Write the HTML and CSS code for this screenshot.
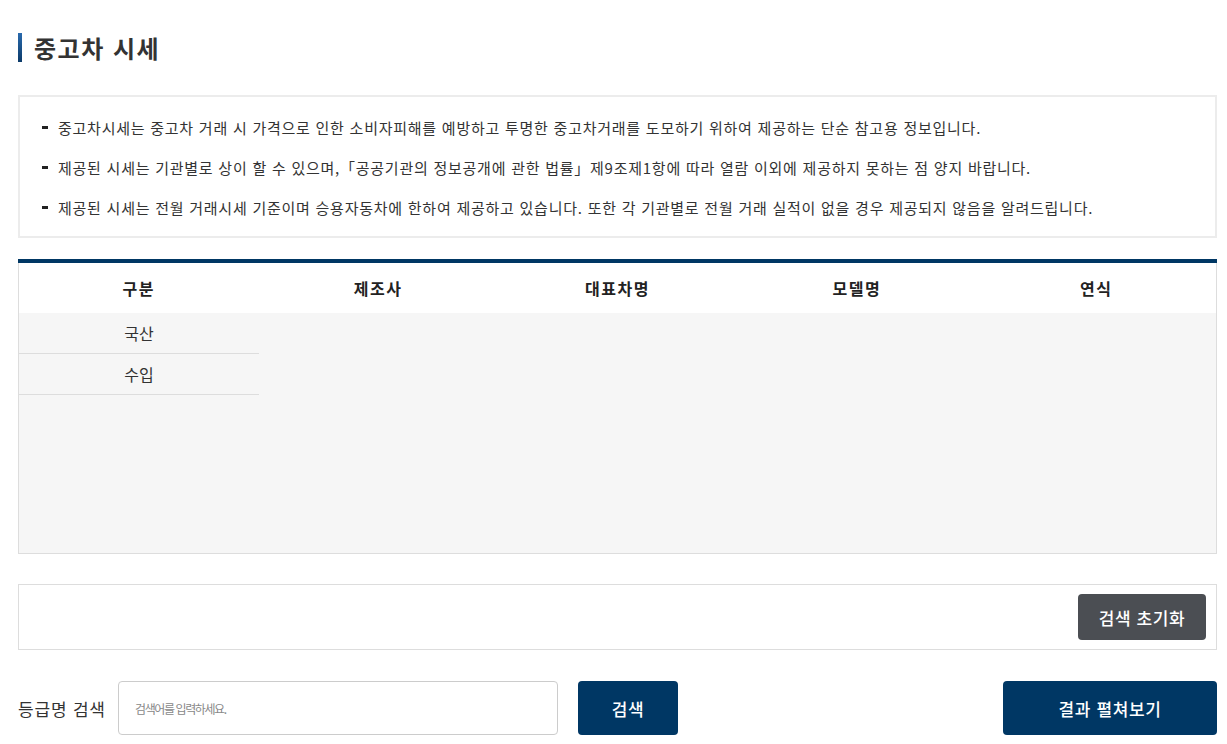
FILE: index.html
```html
<!DOCTYPE html>
<html lang="ko">
<head>
    <meta charset="UTF-8">
    <meta name="viewport" content="width=device-width, initial-scale=1.0">
    <title>중고차 시세</title>
    <link rel="stylesheet" href="styles.css">
</head>
<body>
    <main class="page">
        <h1 class="page-title">중고차 시세</h1>

        <ul class="notice">
            <li>중고차시세는 중고차 거래 시 가격으로 인한 소비자피해를 예방하고 투명한 중고차거래를 도모하기 위하여 제공하는 단순 참고용 정보입니다.</li>
            <li>제공된 시세는 기관별로 상이 할 수 있으며,「공공기관의 정보공개에 관한 법률」제9조제1항에 따라 열람 이외에 제공하지 못하는 점 양지 바랍니다.</li>
            <li>제공된 시세는 전월 거래시세 기준이며 승용자동차에 한하여 제공하고 있습니다. 또한 각 기관별로 전월 거래 실적이 없을 경우 제공되지 않음을 알려드립니다.</li>
        </ul>

        <section class="price-table">
            <div class="table-head">
                <div>구분</div>
                <div>제조사</div>
                <div>대표차명</div>
                <div>모델명</div>
                <div>연식</div>
            </div>
            <div class="table-body">
                <ul class="type-list">
                    <li>국산</li>
                    <li>수입</li>
                </ul>
            </div>
        </section>

        <div class="reset-box">
            <button type="button" class="btn btn-gray">검색 초기화</button>
        </div>

        <form class="search-row" action="/" method="get">
            <label for="grade-name">등급명 검색</label>
            <input id="grade-name" type="text" name="grade-name" placeholder="검색어를 입력하세요.">
            <button type="submit" class="btn btn-navy btn-search">검색</button>
            <button type="button" class="btn btn-navy btn-result">결과 펼쳐보기</button>
        </form>
    </main>
</body>
</html>
```

FILE: styles.css
```css
*,
*::before,
*::after {
    box-sizing: border-box;
    margin: 0;
    padding: 0;
}

body {
    font-family: "Noto Sans CJK KR", "Noto Sans", sans-serif;
    color: #333;
    background: #fff;
}

.page {
    padding: 33px 10px 0 18px;
}

.page-title {
    display: flex;
    align-items: center;
    height: 29px;
    padding-left: 12px;
    border-left: 4px solid #0d3d6e;
    border-image: linear-gradient(#2a6cb0, #0b3866) 1;
    font-size: 24px;
    font-weight: 700;
    line-height: 29px;
    letter-spacing: 1.5px;
    color: #333;
}

.notice {
    margin-top: 33px;
    padding: 21px 22px 18px;
    border: 2px solid #ececec;
    list-style: none;
}

.notice li {
    position: relative;
    padding-left: 16px;
    font-size: 15px;
    line-height: 20px;
    letter-spacing: 0.75px;
    color: #333;
}

.notice li + li {
    margin-top: 20px;
}

.notice li::before {
    content: '';
    position: absolute;
    left: 0;
    top: 8px;
    width: 6px;
    height: 3px;
    background: #222;
}

.price-table {
    margin-top: 21px;
    border-top: 4px solid #003764;
}

.table-head {
    display: grid;
    grid-template-columns: repeat(5, 1fr);
    height: 50px;
    border-left: 1px solid #ddd;
    border-right: 1px solid #ddd;
    background: #fff;
}

.table-head div {
    display: flex;
    align-items: center;
    justify-content: center;
    font-size: 16px;
    font-weight: 700;
    letter-spacing: 1.5px;
    color: #222;
}

.table-body {
    height: 241px;
    border: 1px solid #ddd;
    border-top: 0;
    background: #f6f6f6;
}

.type-list {
    width: 240px;
    list-style: none;
}

.type-list li {
    height: 41px;
    border-bottom: 1px solid #ddd;
    font-size: 16px;
    line-height: 40px;
    text-align: center;
    color: #333;
}

.reset-box {
    display: flex;
    justify-content: flex-end;
    margin-top: 30px;
    padding: 9px 10px;
    border: 1px solid #ddd;
}

.btn {
    border: 0;
    border-radius: 4px;
    font-family: inherit;
    font-size: 17px;
    font-weight: 500;
    letter-spacing: 0.6px;
    color: #fff;
    cursor: pointer;
}

.btn-gray {
    width: 128px;
    height: 46px;
    background: #4b4e53;
}

.btn-navy {
    height: 54px;
    background: #003764;
}

.search-row {
    display: flex;
    align-items: center;
    margin-top: 31px;
}

.search-row label {
    width: 100px;
    font-size: 17px;
    letter-spacing: 0.8px;
    color: #333;
}

.search-row input {
    width: 440px;
    height: 54px;
    padding: 0 16px;
    border: 1px solid #ccc;
    border-radius: 4px;
    font-family: inherit;
    font-size: 12px;
    letter-spacing: -1.4px;
}

.search-row input::placeholder {
    color: #888;
}

.btn-search {
    width: 100px;
    margin-left: 20px;
}

.btn-result {
    width: 214px;
    margin-left: auto;
}
```
